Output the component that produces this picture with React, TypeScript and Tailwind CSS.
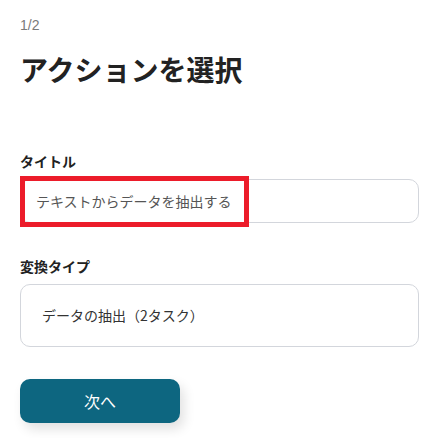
export default function App() {
  return (
    <div
      className="w-[445px] h-[438px] bg-white px-5 pt-[15px]"
      style={{ fontFamily: '"Noto Sans CJK JP", "Noto Sans", sans-serif' }}
    >
      <div
        className="text-[14px] leading-[20px] text-[#7a7a7a]"
        style={{ fontFamily: '"Liberation Sans", Arial, sans-serif' }}
      >
        1/2
      </div>
      <h1 className="mt-[14px] text-[28px] leading-[40px] font-bold text-[#222]">アクションを選択</h1>

      <div className="mt-[62px] text-[14px] leading-[20px] font-bold text-[#222]">タイトル</div>
      <div className="relative mt-[8px] h-[44px] w-[399px] rounded-[10px] border border-[#d3d6dc] flex items-center pl-[15px]">
        <span className="text-[14px] text-[#555]">テキストからデータを抽出する</span>
        <div className="absolute left-[-1px] top-[-4px] w-[229px] h-[51px] border-[5px] border-[#ec1c2a]" />
      </div>

      <div className="mt-[33px] text-[14px] leading-[20px] font-bold text-[#222]">変換タイプ</div>
      <div className="mt-[8px] h-[63px] w-[399px] rounded-[10px] border border-[#d3d6dc] flex items-center pl-[21px]">
        <span className="text-[14px] text-[#333]">データの抽出（2タスク）</span>
      </div>

      <button className="mt-[32px] h-[44px] w-[160px] rounded-[10px] bg-[#0d6680] text-white text-[16px] flex items-center justify-center shadow-[4px_6px_12px_rgba(0,0,0,0.12)]">
        次へ
      </button>
    </div>
  );
}
